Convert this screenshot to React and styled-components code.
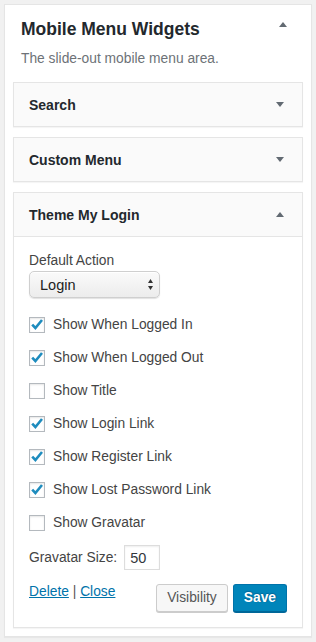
import React from "react";
import styled, { createGlobalStyle } from "styled-components";

const GlobalStyle = createGlobalStyle`
  * { box-sizing: border-box; }
  html, body {
    margin: 0;
    padding: 0;
    background: #f1f1f1;
  }
  body {
    font-family: "Liberation Sans", Arial, Helvetica, sans-serif;
    font-size: 13.8px;
    color: #444;
  }
`;

const Page = styled.div`
  width: 316px;
  padding: 4px 4px 5px 4px;
`;

const Panel = styled.section`
  background: #fff;
  border: 1px solid #e5e5e5;
  box-shadow: 0 1px 1px rgba(0, 0, 0, 0.04);
  padding: 0 8px 8px 8px;
`;

const PanelHeader = styled.header`
  padding: 13px 16px 0 8px;
`;

const HeaderRow = styled.div`
  display: flex;
  justify-content: space-between;
  align-items: flex-start;
`;

const PanelTitle = styled.h2`
  margin: 0;
  font-size: 17.5px;
  line-height: 22px;
  font-weight: bold;
  color: #23282d;
`;

const Description = styled.p`
  margin: 10px 0 0;
  line-height: 18px;
  font-size: 13.8px;
  color: #6d7277;
`;

const ArrowBox = styled.span`
  display: flex;
  margin-top: ${(p) => p.$top || 0}px;
`;

const WidgetList = styled.div`
  margin-top: 14px;
  display: flex;
  flex-direction: column;
  gap: 10px;
`;

const Widget = styled.div`
  background: #fff;
  border: 1px solid #e5e5e5;
  box-shadow: 0 1px 1px rgba(0, 0, 0, 0.04);
`;

const WidgetTop = styled.div`
  background: #fafafa;
  height: ${(p) => (p.$open ? 44 : 43)}px;
  display: flex;
  align-items: center;
  justify-content: space-between;
  padding: 0 18px 0 15px;
  border-bottom: ${(p) => (p.$open ? "1px solid #e5e5e5" : "none")};
`;

const WidgetTitle = styled.h3`
  margin: 0;
  font-size: 14px;
  line-height: 14px;
  font-weight: bold;
  color: #23282d;
`;

const WidgetInside = styled.div`
  padding: 15px 15px 15px 15px;
`;

const FieldLabel = styled.label`
  display: block;
  line-height: 18px;
  color: #444;
`;

const SelectWrap = styled.div`
  position: relative;
  width: 131px;
  height: 27px;
  margin-top: 1px;
`;

const Select = styled.select`
  appearance: none;
  -webkit-appearance: none;
  width: 100%;
  height: 27px;
  margin: 0;
  border: 1px solid #cfcfcf;
  border-radius: 5px;
  background: linear-gradient(to bottom, #fafafa 0%, #ececec 100%);
  box-shadow: 0 1px 1px rgba(0, 0, 0, 0.12), inset 0 1px 0 #fff;
  font-family: "Liberation Sans", Arial, Helvetica, sans-serif;
  font-size: 14.5px;
  color: #222;
  padding: 0 20px 0 10px;
  outline: none;
`;

const SelectArrows = styled.svg`
  position: absolute;
  right: 7px;
  top: 8px;
  pointer-events: none;
`;

const CheckList = styled.div`
  margin-top: 18px;
  display: flex;
  flex-direction: column;
  gap: 15px;
`;

const CheckRow = styled.label`
  display: flex;
  align-items: center;
  gap: 8px;
  height: 18px;
  line-height: 16px;
  color: #444;
`;

const Box = styled.span`
  width: 16px;
  height: 16px;
  flex: none;
  border: 1px solid #b4b9be;
  background: #fff;
  box-shadow: inset 0 1px 2px rgba(0, 0, 0, 0.1);
  display: flex;
  align-items: center;
  justify-content: center;
`;

const SizeRow = styled.div`
  margin-top: 13px;
  display: flex;
  align-items: center;
  gap: 7px;
  color: #444;
`;

const NumberInput = styled.input`
  width: 36px;
  height: 25px;
  margin: 0;
  border: 1px solid #ddd;
  box-shadow: inset 0 1px 2px rgba(0, 0, 0, 0.07);
  background: #fff;
  font-family: "Liberation Sans", Arial, Helvetica, sans-serif;
  font-size: 14.5px;
  color: #32373c;
  padding: 0 5px;
  outline: none;
`;

const Actions = styled.div`
  margin-top: 14px;
  display: flex;
  justify-content: space-between;
  align-items: flex-start;
`;

const Links = styled.div`
  line-height: 18px;
  margin-top: -1px;
  color: #555;
`;

const Link = styled.a`
  color: #0073aa;
  text-decoration: underline;
  cursor: pointer;
`;

const Buttons = styled.div`
  display: flex;
  gap: 5px;
`;

const Button = styled.button`
  height: 28px;
  margin: 0;
  font-family: "Liberation Sans", Arial, Helvetica, sans-serif;
  font-size: 13.8px;
  line-height: 26px;
  padding: 0 10px;
  border-radius: 3px;
  white-space: nowrap;
  cursor: pointer;
  border: 1px solid ${(p) => (p.$primary ? "#0073aa" : "#ccc")};
  border-bottom-color: ${(p) => (p.$primary ? "#006799" : "#ccc")};
  background: ${(p) => (p.$primary ? "#0085ba" : "#f7f7f7")};
  color: ${(p) => (p.$primary ? "#fff" : "#555")};
  font-weight: ${(p) => (p.$primary ? "bold" : "normal")};
  box-shadow: ${(p) => (p.$primary ? "0 1px 0 #006799" : "0 1px 0 #ccc")};
  text-shadow: ${(p) =>
    p.$primary ? "0 -1px 1px #006799, 1px 0 1px #006799" : "none"};
`;

const Triangle = ({ up }) => (
  <svg width="8" height="5" viewBox="0 0 8 5">
    <polygon points={up ? "0,5 4,0 8,5" : "0,0 8,0 4,5"} fill="#626a72" />
  </svg>
);

const CheckMark = () => (
  <svg width="14" height="14" viewBox="0 0 14 14">
    <polyline
      points="2.2,6.6 5.4,10 12,2"
      fill="none"
      stroke="#1e8cbe"
      strokeWidth="2.6"
    />
  </svg>
);

const options = [
  { label: "Show When Logged In", checked: true },
  { label: "Show When Logged Out", checked: true },
  { label: "Show Title", checked: false },
  { label: "Show Login Link", checked: true },
  { label: "Show Register Link", checked: true },
  { label: "Show Lost Password Link", checked: true },
  { label: "Show Gravatar", checked: false },
];

export default function App() {
  return (
    <>
      <GlobalStyle />
      <Page>
        <Panel>
          <PanelHeader>
            <HeaderRow>
              <PanelTitle>Mobile Menu Widgets</PanelTitle>
              <ArrowBox $top={4}>
                <Triangle up />
              </ArrowBox>
            </HeaderRow>
            <Description>The slide-out mobile menu area.</Description>
          </PanelHeader>
          <WidgetList>
            <Widget>
              <WidgetTop>
                <WidgetTitle>Search</WidgetTitle>
                <Triangle />
              </WidgetTop>
            </Widget>
            <Widget>
              <WidgetTop>
                <WidgetTitle>Custom Menu</WidgetTitle>
                <Triangle />
              </WidgetTop>
            </Widget>
            <Widget>
              <WidgetTop $open>
                <WidgetTitle>Theme My Login</WidgetTitle>
                <Triangle up />
              </WidgetTop>
              <WidgetInside>
                <FieldLabel>Default Action</FieldLabel>
                <SelectWrap>
                  <Select defaultValue="login">
                    <option value="login">Login</option>
                    <option value="register">Register</option>
                    <option value="lostpassword">Lost Password</option>
                  </Select>
                  <SelectArrows width="5" height="11" viewBox="0 0 5 11">
                    <polygon points="0,4 2.5,0 5,4" fill="#333" />
                    <polygon points="0,7 5,7 2.5,11" fill="#333" />
                  </SelectArrows>
                </SelectWrap>
                <CheckList>
                  {options.map((o) => (
                    <CheckRow key={o.label}>
                      <Box>{o.checked && <CheckMark />}</Box>
                      {o.label}
                    </CheckRow>
                  ))}
                </CheckList>
                <SizeRow>
                  Gravatar Size:
                  <NumberInput defaultValue="50" />
                </SizeRow>
                <Actions>
                  <Links>
                    <Link>Delete</Link> | <Link>Close</Link>
                  </Links>
                  <Buttons>
                    <Button>Visibility</Button>
                    <Button $primary>Save</Button>
                  </Buttons>
                </Actions>
              </WidgetInside>
            </Widget>
          </WidgetList>
        </Panel>
      </Page>
    </>
  );
}
